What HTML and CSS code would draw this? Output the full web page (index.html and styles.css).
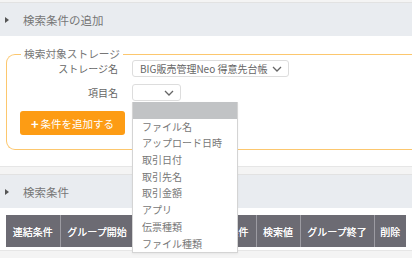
FILE: index.html
```html
<!DOCTYPE html>
<html lang="ja">
<head>
<meta charset="utf-8">
<link rel="stylesheet" href="styles.css">
</head>
<body>
<div class="page">
  <section class="panel panel-add">
    <div class="panel-head"><span class="tri"></span><span class="head-text">検索条件の追加</span></div>
    <div class="panel-body">
      <fieldset class="storage">
        <legend>検索対象ストレージ</legend>
        <div class="form-grid">
          <label class="lbl">ストレージ名</label>
          <div class="select select-wide"><span class="sel-text">BIG販売管理Neo 得意先台帳</span><svg class="chev" width="10" height="6" viewBox="0 0 10 6"><path d="M1 1 L5 5 L9 1" fill="none" stroke="#666" stroke-width="1.3"/></svg></div>
          <label class="lbl">項目名</label>
          <div class="select-wrap">
            <div class="select select-small"><span class="sel-text"></span><svg class="chev" width="10" height="6" viewBox="0 0 10 6"><path d="M1 1 L5 5 L9 1" fill="none" stroke="#666" stroke-width="1.3"/></svg></div>
            <ul class="dropdown">
              <li class="opt opt-active">&nbsp;</li>
              <li class="opt">ファイル名</li>
              <li class="opt">アップロード日時</li>
              <li class="opt">取引日付</li>
              <li class="opt">取引先名</li>
              <li class="opt">取引金額</li>
              <li class="opt">アプリ</li>
              <li class="opt">伝票種類</li>
              <li class="opt">ファイル種類</li>
            </ul>
          </div>
        </div>
        <button class="add-btn"><span class="plus">+</span>条件を追加する</button>
      </fieldset>
    </div>
  </section>
  <section class="panel panel-cond">
    <div class="panel-head"><span class="tri"></span><span class="head-text">検索条件</span></div>
    <div class="panel-body2">
      <table class="cond-table">
        <thead>
          <tr>
            <th class="c1">連結条件</th>
            <th class="c2">グループ開始</th>
            <th class="c3">項目名</th>
            <th class="c4">検索条件</th>
            <th class="c5">検索値</th>
            <th class="c6">グループ終了</th>
            <th class="c7">削除</th>
          </tr>
        </thead>
      </table>
    </div>
  </section>
</div>
</body>
</html>
```
FILE: styles.css
```css
* { box-sizing: border-box; }
html, body { margin: 0; padding: 0; }
body {
  width: 412px;
  height: 258px;
  overflow: hidden;
  background: #f4f4f4;
  font-family: "Noto Sans CJK JP", "Noto Sans", sans-serif;
  color: #666;
}
.page { padding-top: 2px; }
.panel {
  background: #fff;
  border-top: 1px solid #e2e2e2;
  border-bottom: 1px solid #e6e6e6;
}
.panel-cond { margin-top: 7px; }
.panel-head {
  height: 33px;
  background: #e9ecf0;
  display: flex;
  align-items: center;
  padding-left: 5px;
}
.tri {
  width: 0; height: 0;
  border-top: 3.5px solid transparent;
  border-bottom: 3.5px solid transparent;
  border-left: 4px solid #555;
  margin-right: 14px;
}
.head-text {
  font-size: 11.5px;
  color: #777;
}
.panel-body {
  padding: 11px 0 16px 6px;
}
.storage {
  margin: 0;
  border: 1px solid #fcc76e;
  border-right: none;
  border-radius: 9px 0 0 9px;
  padding: 2px 0 14px 13px;
}
.storage legend {
  font-size: 10.7px;
  color: #777;
  padding: 0 3px;
  margin-left: 1px;
  line-height: 14px;
}
.form-grid {
  margin-top: -3px;
  display: grid;
  grid-template-columns: 98px auto;
  column-gap: 14px;
  row-gap: 7px;
  align-items: center;
  justify-items: start;
}
.lbl {
  justify-self: end;
  font-size: 10px;
  color: #666;
}
.select {
  height: 17px;
  border: 1px solid #ddd;
  border-radius: 3px;
  background: #fff;
  display: flex;
  align-items: center;
  padding: 0 6px 0 7px;
}
.select-wide { width: 157px; }
.select-small { width: 49px; }
.sel-text {
  flex: 1;
  font-size: 10px;
  color: #666;
  white-space: nowrap;
  overflow: hidden;
}
.chev { flex: none; }
.select-wrap { position: relative; }
.dropdown {
  position: absolute;
  left: 0;
  top: 18px;
  width: 106px;
  margin: 0;
  padding: 0;
  list-style: none;
  background: #fff;
  border: 1px solid #d4d4d4;
  border-top: none;
  z-index: 5;
  box-shadow: 0 1px 2px rgba(0,0,0,0.06);
}
.opt {
  height: 16.7px;
  line-height: 16.7px;
  font-size: 10px;
  color: #777;
  padding-left: 9px;
  white-space: nowrap;
}
.opt-active { background: #c1c3c5; }
.add-btn {
  margin-top: 10px;
  width: 105px;
  height: 24px;
  border: none;
  border-radius: 3px;
  background: #fd9c14;
  color: #fff;
  font-family: inherit;
  font-size: 10.5px;
  display: flex;
  align-items: center;
  justify-content: center;
  padding: 0;
}
.plus {
  font-size: 13px;
  font-weight: bold;
  margin-right: 2px;
  line-height: 1;
}
.panel-body2 {
  padding: 7px 6px 3px 6px;
}
.cond-table {
  border-collapse: collapse;
  width: 400px;
  table-layout: fixed;
}
.cond-table th {
  height: 32px;
  background: #6c6b73;
  color: #fff;
  font-size: 10px;
  font-weight: normal;
  text-align: center;
  padding: 0;
  border-left: 1px solid #9c9ba2;
  white-space: nowrap;
  text-shadow: 0 0 0.4px #fff;
}
.cond-table th:first-child { border-left: none; }
.c1 { width: 54px; }
.c2 { width: 74px; }
.c3 { width: 67px; }
.c4 { width: 55px; }
.c5 { width: 44px; }
.c6 { width: 74px; }
.c7 { width: 32px; }
```
